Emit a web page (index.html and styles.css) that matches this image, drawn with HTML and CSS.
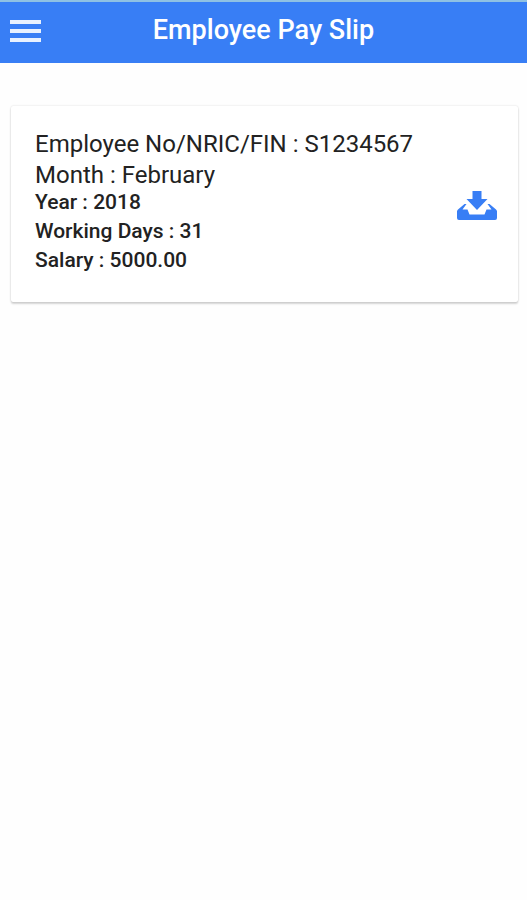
FILE: index.html
```
<!DOCTYPE html>
<html lang="en">
<head>
    <meta charset="UTF-8">
    <meta name="viewport" content="width=device-width, initial-scale=1.0">
    <title>Employee Pay Slip</title>
    <link rel="stylesheet" href="styles.css">
</head>
<body>
    <header class="toolbar">
      <button class="menu-button" type="button" aria-label="Menu">
        <svg width="31" height="22" viewBox="0 0 31 22" fill="currentColor">
          <rect width="31" height="4"/>
          <rect y="9" width="31" height="4"/>
          <rect y="18" width="31" height="4"/>
        </svg>
      </button>
      <h1 class="title">Employee Pay Slip</h1>
    </header>

    <main class="content">
      <section class="card">
        <div class="details">
          <h2>Employee No/NRIC/FIN : S1234567</h2>
          <h2>Month : February</h2>
          <p>Year : 2018</p>
          <p>Working Days : 31</p>
          <p>Salary : 5000.00</p>
        </div>
        <button class="download-button" type="button" aria-label="Download">
          <svg width="42" height="30" viewBox="0 0 42 30" fill="currentColor">
            <path d="M16.500 0h9v8h6L21 19 10.500 8h6z"/>
            <path d="M8.500 13h2l-4 5.500h5l2 5h15l2-5h5l-4-5.500h2l6.500 5.500q1 .8 1 2V27q0 2-2 2H3q-2 0-2-2v-6.500q0-1.200 1-2z"/>
          </svg>
        </button>
      </section>
    </main>
</body>
</html>
```
FILE: styles.css
```
body {
    margin: 0;
    min-height: 100vh;
    background-color: #fefefe;
    color: #222;
    font-family: Roboto, sans-serif;
}

button {
    display: flex;
    padding: 0;
    border: none;
    background: none;
    cursor: pointer;
}

.toolbar {
    display: grid;
    grid-template-columns: 32px 1fr 32px;
    box-sizing: border-box;
    height: 63px;
    padding: 12px 10px;
    border-top: 2px solid #8fc1e3;
    background-color: #387ef5;
    color: white;
}

.menu-button {
    padding-top: 6px;
    color: #e8f1ff;
}

.title {
    margin: 0;
    font-size: 27px;
    font-weight: 500;
    line-height: 32px;
    text-align: center;
}

.content {
    padding: 43px 9px 0 11px;
}

.card {
    display: flex;
    align-items: center;
    justify-content: space-between;
    padding: 24px 20px 25px 24px;
    border-radius: 2px;
    background-color: white;
    box-shadow: 0 2px 2px rgba(0, 0, 0, 0.16), 0 0 2px rgba(0, 0, 0, 0.16);
}

.details h2 {
    margin: 0;
    font-size: 24px;
    font-weight: 400;
    line-height: 29px;
}

.details h2 + h2 {
    margin-top: 2px;
}

.details p {
    margin: 0 0 4px;
    font-size: 21px;
    font-weight: 500;
    line-height: 25px;
}

.download-button {
    padding-top: 4px;
    color: #387ef5;
}
```
